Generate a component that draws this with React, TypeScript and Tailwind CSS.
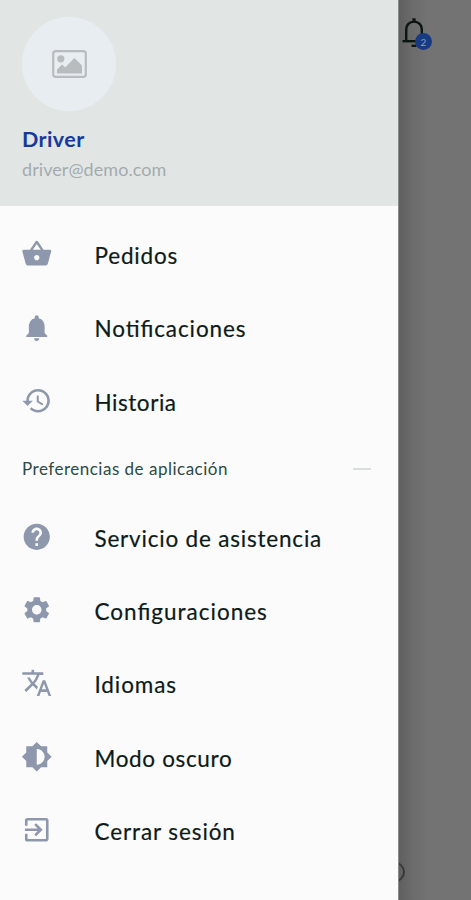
import type { IconType } from 'react-icons';
import {
  MdBrightness6,
  MdExitToApp,
  MdHelp,
  MdHistory,
  MdNotifications,
  MdSettings,
  MdShoppingBasket,
  MdTranslate,
} from 'react-icons/md';

type Item = { label: string; icon: IconType; tracking: string };

const MAIN: Item[] = [
  { label: 'Pedidos', icon: MdShoppingBasket, tracking: 'tracking-[0.8px]' },
  { label: 'Notificaciones', icon: MdNotifications, tracking: 'tracking-[0.9px]' },
  { label: 'Historia', icon: MdHistory, tracking: 'tracking-[0.55px]' },
];

const PREFERENCES: Item[] = [
  { label: 'Servicio de asistencia', icon: MdHelp, tracking: 'tracking-[0.8px]' },
  { label: 'Configuraciones', icon: MdSettings, tracking: 'tracking-[1px]' },
  { label: 'Idiomas', icon: MdTranslate, tracking: 'tracking-[0.9px]' },
  { label: 'Modo oscuro', icon: MdBrightness6, tracking: 'tracking-[0.65px]' },
  { label: 'Cerrar sesión', icon: MdExitToApp, tracking: 'tracking-[0.9px]' },
];

function MenuItem({ label, icon: Icon, tracking }: Item) {
  return (
    <li className="flex h-[73.3px] items-center pl-[21px]">
      <Icon className="size-[31.5px] shrink-0 text-[#8d98ac]" />
      <span
        className={`ml-[42px] mt-[4px] text-[22.5px] leading-7 whitespace-nowrap text-[#0d1a18] [-webkit-text-stroke:0.2px_#0d1a18] [font-feature-settings:'liga'] ${tracking}`}
      >
        {label}
      </span>
    </li>
  );
}

function Avatar() {
  return (
    <div className="flex size-[94px] items-center justify-center rounded-full bg-[#e8edf1]">
      <svg viewBox="0 0 35 28" className="h-7 w-[35px] text-[#b9bcbf]" fill="none">
        <rect x="1.2" y="1.2" width="32.6" height="25.6" rx="2.6" stroke="currentColor" strokeWidth="2.2" />
        <circle cx="8.8" cy="8.8" r="3.6" fill="currentColor" />
        <path d="M5 23.4v-3.8l5-5 3.2 2.7 9.3-9.2 7.5 7.4v7.9z" fill="currentColor" />
      </svg>
    </div>
  );
}

export default function App() {
  return (
    <div className="flex h-[900px] w-[471px] overflow-hidden bg-[#737373] font-['Lato',sans-serif]">
      <aside className="w-[398px] shrink-0 bg-[#fbfbfb]">
        <header className="h-[206px] bg-[#e1e6e5] pt-[17px] pl-[22px]">
          <Avatar />
          <p className="mt-[14px] text-[21.5px] leading-7 font-bold tracking-[0.4px] text-[#163a9c]">Driver</p>
          <p className="mt-1 text-[18px] leading-6 tracking-[0.07px] text-[#a4abad]">driver@demo.com</p>
        </header>
        <ul className="pt-[11.5px]">
          {MAIN.map((item) => (
            <MenuItem key={item.label} {...item} />
          ))}
        </ul>
        <div className="flex h-[62.6px] items-center justify-between pr-[27px] pl-[22px]">
          <span className="text-[17px] leading-6 tracking-[0.5px] text-[#2d4a44]">Preferencias de aplicación</span>
          <span className="h-[2px] w-[18px] bg-[#dadddd]" />
        </div>
        <ul>
          {PREFERENCES.map((item) => (
            <MenuItem key={item.label} {...item} />
          ))}
        </ul>
      </aside>

      {/* dimmed page behind the drawer */}
      <div className="relative flex-1 overflow-hidden border-l border-[#8b8d8d] bg-linear-to-r from-[#5f5f5f] via-[#6c6c6c] via-20% to-[#737373] to-40%">
        <svg viewBox="0 0 24 30" className="absolute top-[18px] left-[3px] h-[30px] w-6" fill="none" stroke="#0b1513" strokeWidth="2.4">
          <path d="M4.2 22.6V11.5C4.2 7 7.4 3.6 12 3.6s7.8 3.4 7.8 7.9v11.1" />
          <path d="M0.5 23.2h23" />
          <path d="M12 3.8V.3" strokeWidth="3.2" />
          <path d="M9.5 27.8h5" />
        </svg>
        <span className="absolute top-[33px] left-[16px] flex size-[17px] items-center justify-center rounded-full bg-[#173a83] text-[10px] leading-none text-[#8d9dbd]">
          2
        </span>
        <span className="absolute top-[862px] -left-[14px] size-5 rounded-full border-2 border-[#363a39]" />
      </div>
    </div>
  );
}
